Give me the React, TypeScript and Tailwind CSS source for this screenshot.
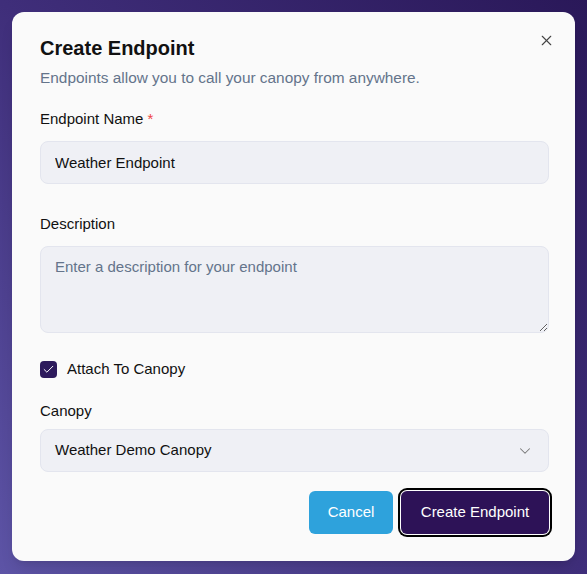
import { X, ChevronDown, Check } from 'lucide-react';

export default function App() {
  return (
    <div
      className="min-h-[574px] w-full bg-gradient-to-tr from-[#5d54a6] via-[#3f2e7a] to-[#2a1859] p-3"
      style={{ fontFamily: '"Liberation Sans", Arial, sans-serif' }}
    >
      <div className="relative h-[549px] w-[563px] rounded-xl bg-[#fafafa] pl-7 pr-[26px] pt-[22px] pb-7 shadow-lg">
        <button className="absolute right-[20px] top-[20px] text-[#444]">
          <X size={17} strokeWidth={1.6} />
        </button>

        <h1 className="text-[20px] leading-7 font-bold text-[#111]">Create Endpoint</h1>
        <p className="mt-[6px] text-[15.4px] leading-5 text-[#64748b]">
          Endpoints allow you to call your canopy from anywhere.
        </p>

        <label className="mt-[21px] block text-[15px] leading-5 text-[#111]">
          Endpoint Name <span className="text-[#ef4444]">*</span>
        </label>
        <input
          type="text"
          defaultValue="Weather Endpoint"
          className="mt-[12px] h-[43px] w-full rounded-lg border border-[#e3e5ee] bg-[#eff0f5] px-[14px] text-[15px] text-[#111] outline-none"
        />

        <label className="mt-[30px] block text-[15px] leading-5 text-[#111]">Description</label>
        <textarea
          placeholder="Enter a description for your endpoint"
          className="mt-[12px] block h-[87px] w-full rounded-lg border border-[#e3e5ee] bg-[#eff0f5] px-[14px] py-[10px] text-[15px] leading-5 text-[#111] outline-none placeholder:text-[#64748b]"
        />

        <div className="mt-[26px] flex items-center gap-[10px]">
          <span className="flex h-[17px] w-[17px] items-center justify-center rounded-[4px] bg-[#2d1a5c]">
            <Check size={13} strokeWidth={1.8} className="text-white" />
          </span>
          <span className="text-[15px] leading-5 text-[#111]">Attach To Canopy</span>
        </div>

        <label className="mt-[22px] block text-[15px] leading-5 text-[#111]">Canopy</label>
        <div className="mt-[8px] flex h-[43px] w-full items-center justify-between rounded-lg border border-[#e3e5ee] bg-[#eff0f5] pl-[14px] pr-[14px] text-[15px] text-[#111]">
          <span>Weather Demo Canopy</span>
          <ChevronDown size={18} strokeWidth={1.4} className="text-[#777]" />
        </div>

        <div className="mt-[19px] flex justify-end gap-2">
          <button className="h-[43px] w-[84px] rounded-md bg-[#2ea2dc] text-[15px] text-white">
            Cancel
          </button>
          <button className="h-[43px] w-[148px] rounded-md bg-[#2d1257] text-[15px] text-white ring-2 ring-black ring-offset-1 ring-offset-white">
            Create Endpoint
          </button>
        </div>
      </div>
    </div>
  );
}
